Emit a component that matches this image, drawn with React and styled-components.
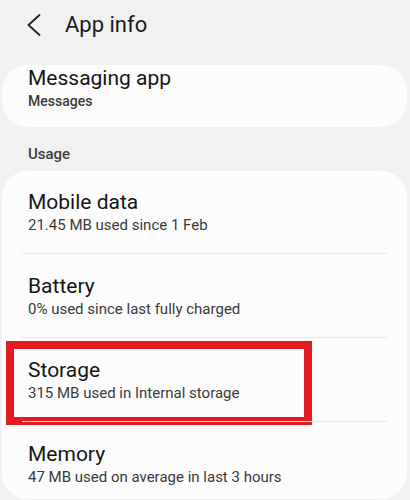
import React from "react";
import styled, { createGlobalStyle } from "styled-components";

const GlobalStyle = createGlobalStyle`
  body {
    margin: 0;
    background: #f1f1f1;
    font-family: Roboto, "Noto Sans", "Liberation Sans", sans-serif;
    color: #161616;
  }
`;

const Screen = styled.div`
  width: 410px;
  height: 500px;
  overflow: hidden;
  background: #f1f1f1;
`;

const Header = styled.header`
  height: 65px;
  display: flex;
  align-items: flex-start;
  padding-top: 11px;
  box-sizing: border-box;
`;

const BackButton = styled.div`
  width: 65px;
  height: 28px;
  display: flex;
  align-items: center;
  padding-left: 27px;
  box-sizing: border-box;
`;

const Title = styled.h1`
  margin: 0;
  font-size: 22px;
  line-height: 28px;
  font-weight: 400;
  color: #1a1a1a;
`;

const Card = styled.section`
  margin: 0 3px 0 2px;
  background: #fcfcfc;
  border-radius: 26px;
  padding: ${p => p.$pad || "0"};
  position: relative;
`;

const SectionLabel = styled.div`
  margin: 17px 0 7px;
  padding-left: 28px;
  font-size: 15px;
  line-height: 20px;
  font-weight: 500;
  color: #3c3c3c;
`;

const Row = styled.div`
  position: relative;
  padding: ${p => p.$top}px 24px ${p => p.$bottom}px 26px;
  border-top: ${p => (p.$divider ? "1px solid transparent" : "none")};

  &::before {
    content: "";
    display: ${p => (p.$divider ? "block" : "none")};
    position: absolute;
    top: -1px;
    left: 20px;
    right: 20px;
    height: 1px;
    background: #e7e7e7;
  }
`;

const RowTitle = styled.div`
  font-size: 21px;
  line-height: 26px;
  color: #161616;
`;

const RowSub = styled.div`
  font-size: ${p => (p.$small ? 14 : 15)}px;
  line-height: 20px;
  font-weight: ${p => (p.$small ? 500 : 400)};
  color: #3a3a3a;
`;

const Highlight = styled.div`
  position: absolute;
  left: 4px;
  top: 3px;
  width: 306px;
  height: 84px;
  box-sizing: border-box;
  border: 8px solid #e21b24;
  pointer-events: none;
`;

const rows = [
  { title: "Mobile data", sub: "21.45 MB used since 1 Feb" },
  { title: "Battery", sub: "0% used since last fully charged" },
  { title: "Storage", sub: "315 MB used in Internal storage", marked: true },
  { title: "Memory", sub: "47 MB used on average in last 3 hours" }
];

const App = () => {
  return (
    <Screen>
      <GlobalStyle />
      <Header>
        <BackButton>
          <svg width="14" height="22" viewBox="0 0 14 22">
            <polyline
              points="12.5,1 1.5,11 12.5,21"
              fill="none"
              stroke="#222"
              strokeWidth="1.8"
              strokeLinecap="round"
              strokeLinejoin="round"
            />
          </svg>
        </BackButton>
        <Title>App info</Title>
      </Header>

      <Card $pad="0 26px 16px 26px">
        <RowTitle>Messaging app</RowTitle>
        <RowSub $small>Messages</RowSub>
      </Card>

      <SectionLabel>Usage</SectionLabel>

      <Card>
        {rows.map((r, i) => (
          <Row
            key={r.title}
            $divider={i > 0}
            $top={i === 0 ? 18 : 19}
            $bottom={i === rows.length - 1 ? 12 : 18}
          >
            <RowTitle>{r.title}</RowTitle>
            <RowSub>{r.sub}</RowSub>
            {r.marked && <Highlight />}
          </Row>
        ))}
      </Card>
    </Screen>
  );
};

export default App;
